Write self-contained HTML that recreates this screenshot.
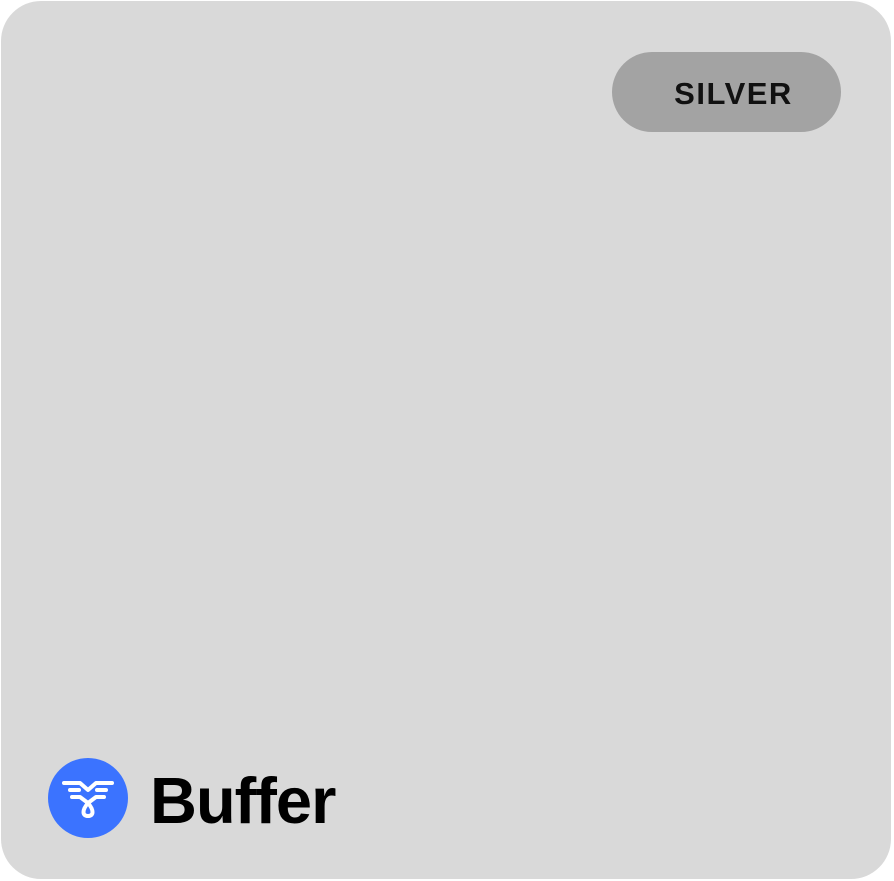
<!DOCTYPE html>
<html><head><style>
html,body{margin:0;padding:0;background:#fff;width:894px;height:881px;overflow:hidden}
.card{position:absolute;left:1px;top:1px;width:890px;height:878px;background:#d9d9d9;border-radius:40px}
.badge{position:absolute;left:612px;top:52px;width:229px;height:80px;border-radius:40px;background:#a3a3a3;font:bold 31px "Liberation Sans",sans-serif;color:#111;display:flex;align-items:center;justify-content:center;letter-spacing:1.5px;box-sizing:border-box;padding-left:14px;padding-top:3px}
.logo{position:absolute;left:48px;top:758px}
.name{position:absolute;left:150px;top:761px;font:bold 65px "Liberation Sans",sans-serif;color:#000;letter-spacing:-1px;line-height:80px}
</style></head><body>
<div class="card"></div>
<div class="badge">SILVER</div>
<svg class="logo" width="80" height="80" viewBox="0 0 80 80">
<circle cx="40" cy="40" r="40" fill="#3b73ff"/>
<g fill="none" stroke="#fff" stroke-width="4" stroke-linecap="round" stroke-linejoin="round">
<path d="M16 25 H32 L40 32 L48 25 H64"/>
<path d="M22 32 H31"/><path d="M49 32 H58"/>
<path d="M24 39 H32 L40 45"/><path d="M56 39 H48 L40 45"/>
<path d="M40 45 C34 52 34 58 40 58 C46 58 46 52 40 45 Z"/>
</g>
</svg>
<div class="name">Buffer</div>
</body></html>
